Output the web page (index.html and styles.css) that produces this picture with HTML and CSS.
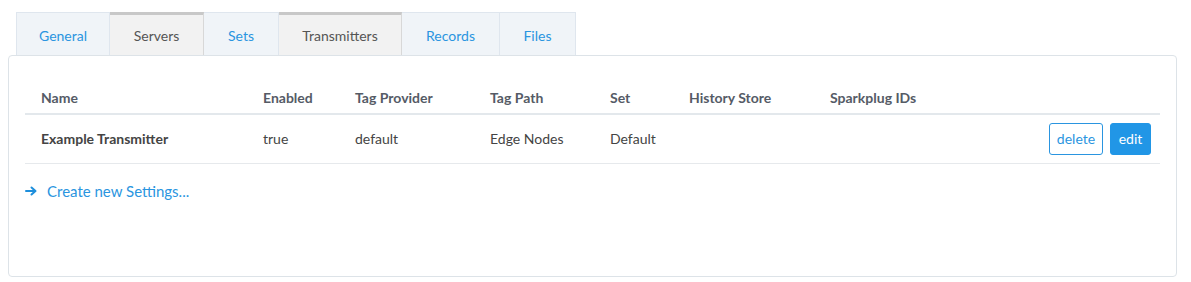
FILE: index.html
```html
<!DOCTYPE html>
<html>
<head>
<meta charset="utf-8">
<link rel="stylesheet" href="styles.css">
</head>
<body>
<div class="page">
  <nav class="tabs">
    <a class="tab">General</a>
    <a class="tab active">Servers</a>
    <a class="tab">Sets</a>
    <a class="tab active">Transmitters</a>
    <a class="tab">Records</a>
    <a class="tab">Files</a>
  </nav>
  <section class="panel">
    <table class="grid">
      <colgroup>
        <col class="c-name"><col class="c-en"><col class="c-tp"><col class="c-path"><col class="c-set"><col class="c-hist"><col class="c-sp"><col>
      </colgroup>
      <thead>
        <tr><th>Name</th><th>Enabled</th><th>Tag Provider</th><th>Tag Path</th><th>Set</th><th>History Store</th><th>Sparkplug IDs</th><th></th></tr>
      </thead>
      <tbody>
        <tr>
          <td class="strong">Example Transmitter</td>
          <td>true</td>
          <td>default</td>
          <td>Edge Nodes</td>
          <td>Default</td>
          <td></td>
          <td></td>
          <td class="actions"><button class="btn outline">delete</button><button class="btn solid">edit</button></td>
        </tr>
      </tbody>
    </table>
    <a class="create"><svg class="arrow" width="12" height="10" viewBox="0 0 12 10"><path d="M1 5H10M6.5 1.5L10.5 5L6.5 8.5" fill="none" stroke="#1e8fdc" stroke-width="2" stroke-linecap="round" stroke-linejoin="round"/></svg>Create new Settings...</a>
  </section>
</div>
</body>
</html>
```
FILE: styles.css
```css
* { box-sizing: border-box; }
body { margin: 0; background: #fff; font-family: "Lato", "Open Sans", sans-serif; color: #444; }
.page { padding: 12px 14px 0 8px; }
.tabs { display: flex; margin-left: 8px; height: 43px; }
.tab {
  display: flex; align-items: center; justify-content: center;
  height: 43px; padding: 3px 0 0; font-size: 14px; color: #2a95e0;
  background: #f0f4f8; border: 1px solid #dfe6ee; border-bottom: none; border-left: none;
}
.tab:first-child { border-left: 1px solid #dfe6ee; }
.tab:nth-child(1) { width: 94px; }
.tab:nth-child(2) { width: 94px; }
.tab:nth-child(3) { width: 75px; }
.tab:nth-child(4) { width: 123px; }
.tab:nth-child(5) { width: 98px; }
.tab:nth-child(6) { width: 76px; }
.tab.active { background: #f2f2f2; color: #555; border-top: 3px solid #c8c8c8; border-right-color: #d8d8d8; padding-top: 0; }
.panel {
  border: 1px solid #dde3e8; border-radius: 4px; height: 222px;
  padding: 24px 16px 0;
}
.grid { width: 100%; border-collapse: collapse; table-layout: fixed; font-size: 14px; }
.c-name { width: 222px; } .c-en { width: 92px; } .c-tp { width: 135px; } .c-path { width: 120px; }
.c-set { width: 79px; } .c-hist { width: 141px; } .c-sp { width: 120px; }
th { text-align: left; font-weight: 700; color: #555b66; padding: 0 16px; height: 34px; border-bottom: 2px solid #e3e8ec; vertical-align: top; padding-top: 9px; }
td { padding: 0 16px; height: 49px; border-bottom: 1px solid #e6e9ec; color: #444; }
td.strong { font-weight: 700; color: #444; }
td.actions { text-align: right; padding-right: 9px; white-space: nowrap; }
.btn { font-family: inherit; font-size: 14px; height: 32px; border-radius: 3px; padding: 0 6px; margin-left: 7px; cursor: pointer; }
.btn.outline { background: #fff; color: #2a95e0; border: 1px solid #2a95e0; width: 54px; }
.btn.solid { background: #2196e6; color: #fff; border: 1px solid #2196e6; width: 41px; }
.create { display: flex; align-items: center; margin-top: 18px; font-size: 15px; color: #2a95e0; }
.arrow { margin-right: 10px; }
```
